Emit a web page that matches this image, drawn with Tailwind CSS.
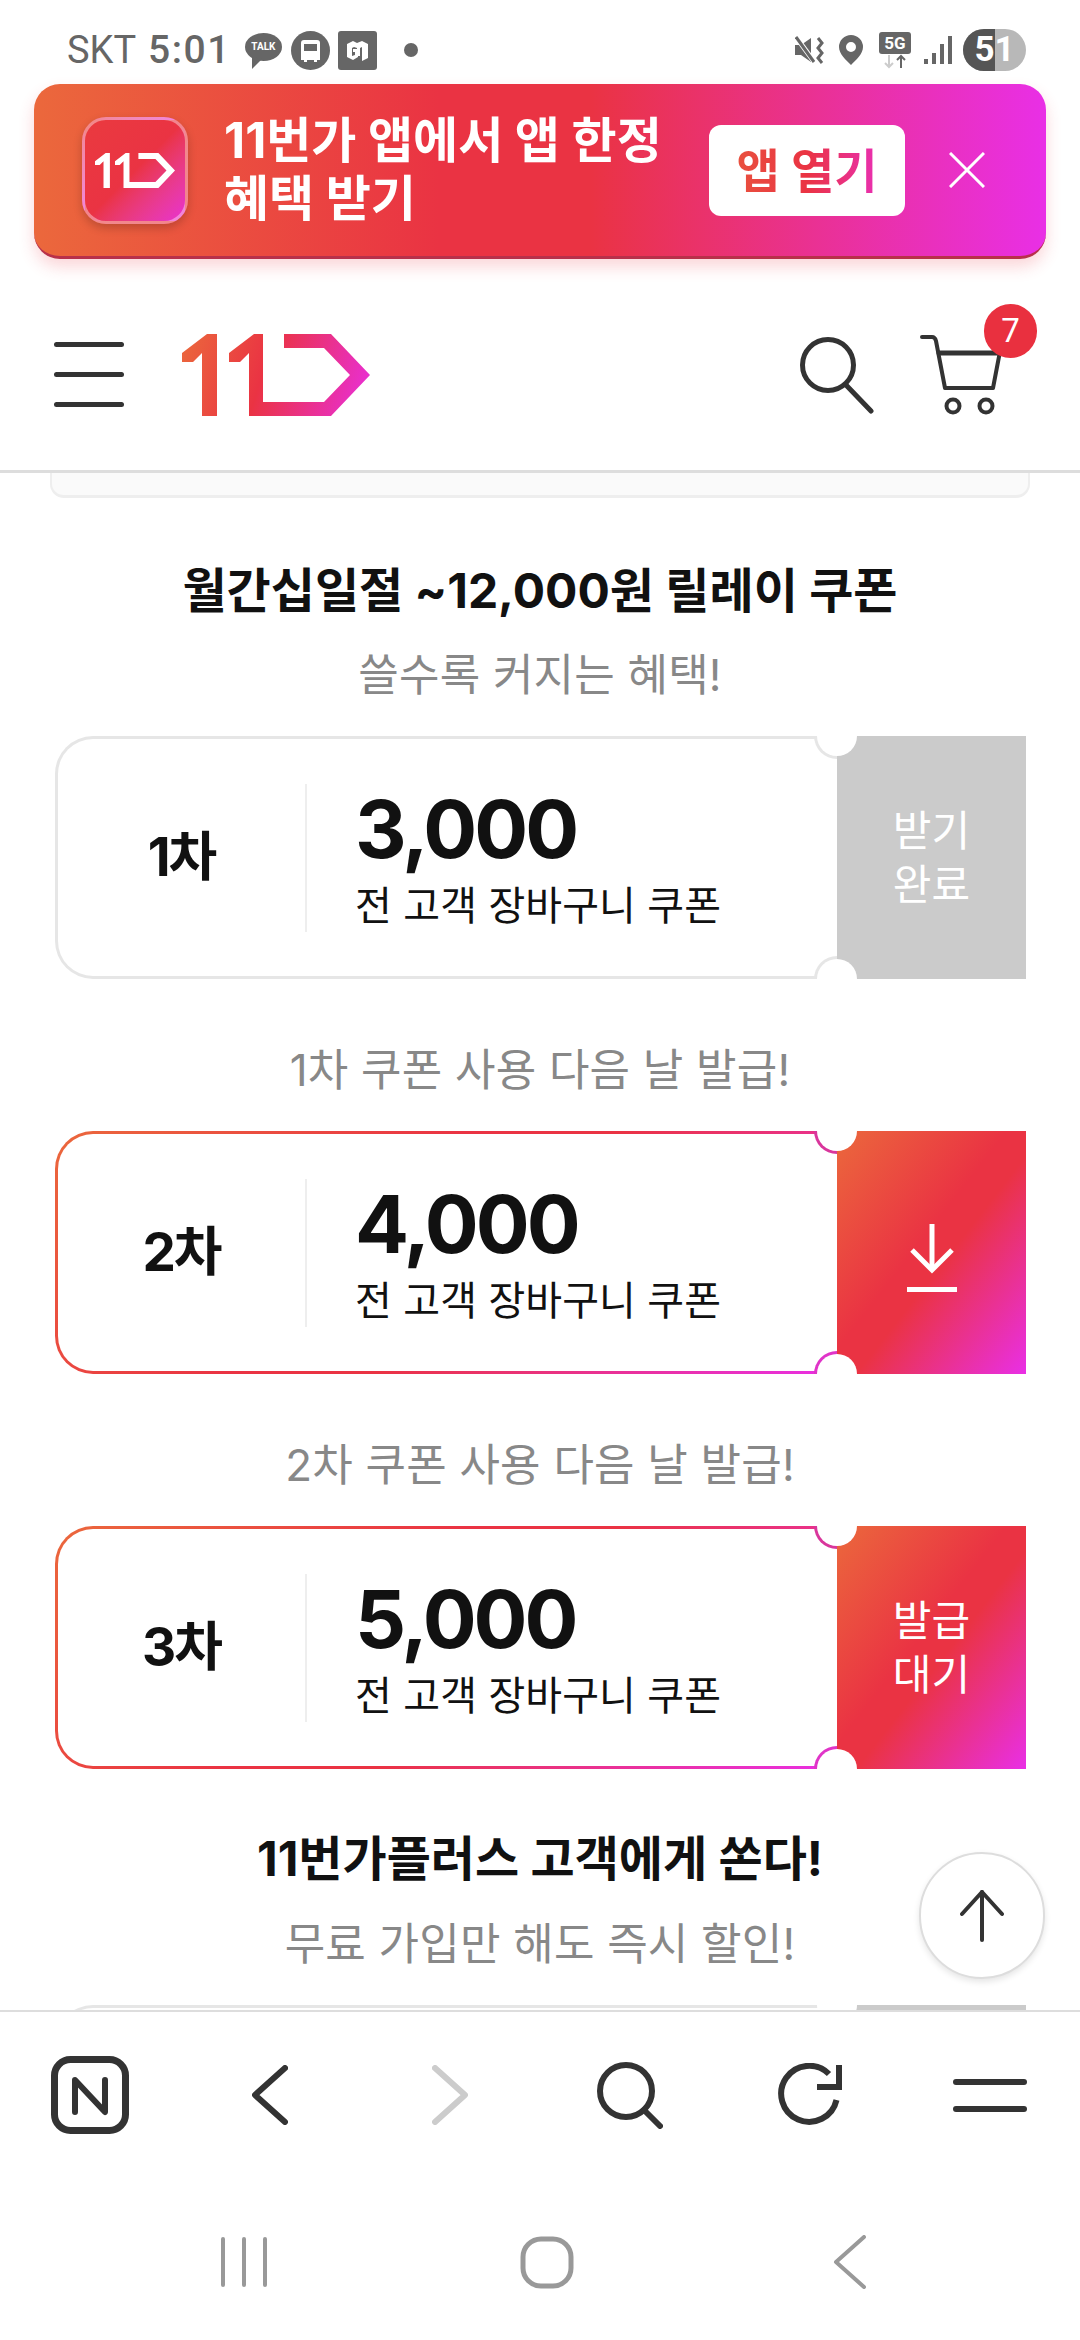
<!DOCTYPE html>
<html lang="ko">
<head>
  <meta charset="UTF-8">
  <meta name="viewport" content="width=device-width, initial-scale=1.0">
  <title>11번가 쿠폰</title>
  <script src="https://cdn.jsdelivr.net/npm/@tailwindcss/browser@4"></script>
</head>
<body class="bg-white">
  <div class="relative w-[1080px] h-[2340px] overflow-hidden bg-white flex flex-col font-['Inter','Noto_Sans_CJK_KR',sans-serif] text-[#111]">

    <!-- Status bar -->
    <div class="h-[84px] shrink-0 flex items-center justify-between pl-[67px] pr-[54px] pt-[16px] text-[#666]">
      <div class="flex items-center">
        <span class="font-['Roboto',sans-serif] text-[38px] leading-none">SKT</span>
        <span class="ml-[12px] font-['Roboto',sans-serif] font-medium text-[39px] leading-none tracking-[1.500px]">5:01</span>
        <div class="relative ml-[14px] w-[37px] h-[34px]">
          <svg width="37" height="36" viewBox="0 0 37 36" class="absolute inset-0"><ellipse cx="18.500" cy="14" rx="18.500" ry="14" fill="#666"/><path d="M7 24L7 36L17 26Z" fill="#666"/></svg>
          <span class="absolute left-0 top-[8px] w-[37px] text-center text-[10px] leading-[12px] font-bold text-white font-['Roboto',sans-serif]">TALK</span>
        </div>
        <svg class="ml-[9px]" width="39" height="39" viewBox="0 0 39 39"><circle cx="19.500" cy="19.500" r="19.500" fill="#666"/><path d="M10 12a3 3 0 0 1 3-3h13a3 3 0 0 1 3 3v17h-3v2h-3v-2h-7v2h-3v-2h-3Z" fill="#fff"/><path d="M13 13h13v7H13Z" fill="#666"/></svg>
        <svg class="ml-[8px]" width="39" height="39" viewBox="0 0 39 39"><rect width="39" height="39" rx="3" fill="#666"/><path d="M9 13l6-3 4 2 5-2 6 3v14l-6 3v-14l-2 1v8h-3v-8l-3-1-2 1v8l3-1v-3h-2v-3h5v8l-5 3-6-3Z" fill="#fff"/></svg>
        <span class="ml-[27px] w-[14px] h-[14px] rounded-full bg-[#666]"></span>
      </div>
      <div class="flex items-center">
        <svg width="30" height="28" viewBox="0 0 30 28"><path d="M0 9h6l10-7v24l-10-7H0Z" fill="#666"/><path d="M1 1l19 26" stroke="#fff" stroke-width="5"/><path d="M1 1l18 25" stroke="#666" stroke-width="3"/><path d="M23 2l4 5-4 5 4 5-4 5 4 5" fill="none" stroke="#666" stroke-width="3"/></svg>
        <svg class="ml-[14px]" width="24" height="30" viewBox="0 0 24 30"><path fill-rule="evenodd" d="M12 0a12 12 0 0 1 12 12c0 7-7 13-12 18C7 25 0 19 0 12A12 12 0 0 1 12 0Zm0 7a5 5 0 1 0 0 10 5 5 0 0 0 0-10Z" fill="#666"/></svg>
        <div class="ml-[16px] w-[32px] h-[37px] flex flex-col items-center">
          <span class="w-[32px] h-[22px] rounded-[3px] bg-[#666] text-white text-[17px] leading-[22px] font-bold text-center font-['Roboto',sans-serif]">5G</span>
          <svg width="24" height="15" viewBox="0 0 24 15"><path d="M6 1v12M2 9l4 4 4-4" fill="none" stroke="#ccc" stroke-width="2"/><path d="M18 14V2M14 6l4-4 4 4" fill="none" stroke="#666" stroke-width="2"/></svg>
        </div>
        <svg class="ml-[13px]" width="28" height="30" viewBox="0 0 28 30"><path d="M2 24v5M10 18v11M18 9v20M26 1v28" stroke="#666" stroke-width="4"/></svg>
        <div class="relative ml-[11px] w-[63px] h-[42px] rounded-full overflow-hidden bg-[#b8b8b8]">
          <div class="absolute left-0 top-0 w-[32px] h-[42px] bg-[#555]"></div>
          <span class="absolute inset-0 text-center text-white font-bold text-[35px] leading-[42px] font-['Roboto',sans-serif]">51</span>
        </div>
      </div>
    </div>

    <!-- App banner -->
    <div class="mx-[34px] h-[175px] shrink-0 rounded-[26px] border-b-[3px] border-[#b8304a] bg-[linear-gradient(90deg,#eb683c_0%,#ea3343_40%,#ea3343_55%,#e92fe6_100%)] shadow-[0_8px_16px_rgba(234,51,67,0.2)] flex items-center pl-[48px] z-10">
      <div class="w-[106px] h-[107px] shrink-0 rounded-[24px] border-[3px] border-white/40 bg-linear-to-br from-[#ea3a3f] via-[#ea3343] to-[#e92fd0] shadow-[0_4px_10px_rgba(0,0,0,0.2)] flex items-center justify-center">
        <svg width="80" height="35" viewBox="0 0 188 82"><path d="M25 0H35V82H20V19L11 28H0V19Z M72 0H81V68H142L168 41L142 14H102V0H149L188 41L149 82H67V19L58 28H47V19Z" fill="#fff"/></svg>
      </div>
      <p class="ml-[36px] w-[440px] shrink-0 text-white font-bold text-[49px] leading-[58px] whitespace-nowrap">11번가 앱에서 앱 한정<br>혜택 받기</p>
      <div class="ml-[45px] w-[196px] h-[91px] shrink-0 rounded-[12px] bg-white flex items-center justify-center">
        <span class="font-bold text-[47px] leading-none bg-[linear-gradient(90deg,#e9503e_0%,#ea3343_50%,#e92fb0_100%)] bg-clip-text text-transparent">앱 열기</span>
      </div>
      <svg class="ml-[44px] shrink-0" width="36" height="36" viewBox="0 0 36 36"><path d="M1 1L35 35M35 1L1 35" stroke="#fff" stroke-width="3"/></svg>
    </div>

    <!-- Header -->
    <div class="h-[217px] shrink-0 -mt-[3px] border-b-[3px] border-[#ddd] flex items-center pl-[54px] pr-[76px] pt-[23px]">
      <div class="flex flex-col gap-[25px] w-[70px]">
        <span class="h-[5px] rounded-full bg-[#333]"></span>
        <span class="h-[5px] rounded-full bg-[#333]"></span>
        <span class="h-[5px] rounded-full bg-[#333]"></span>
      </div>
      <svg class="ml-[58px]" width="188" height="82" viewBox="0 0 188 82">
        <defs><linearGradient id="logoGrad" gradientUnits="userSpaceOnUse" x1="0" y1="0" x2="188" y2="60"><stop offset="0" stop-color="#eb683c"/><stop offset="0.45" stop-color="#ea3343"/><stop offset="1" stop-color="#e92fd6"/></linearGradient></defs>
        <path d="M25 0H35V82H20V19L11 28H0V19Z M72 0H81V68H142L168 41L142 14H102V0H149L188 41L149 82H67V19L58 28H47V19Z" fill="url(#logoGrad)"/>
      </svg>
      <svg class="ml-auto" width="74" height="78" viewBox="0 0 74 78" fill="none" stroke="#333" stroke-width="5" stroke-linecap="round"><circle cx="28" cy="29" r="25.500"/><path d="M46 49L71 75"/></svg>
      <div class="relative ml-[46px] w-[84px] h-[80px]">
        <svg width="84" height="80" viewBox="0 0 84 80" fill="none" stroke="#333" stroke-linecap="round" stroke-linejoin="round"><path d="M2 2H12Q15 2 16 6L25 53H73L82 6" stroke-width="4"/><path d="M19 18H82" stroke-width="5"/><circle cx="33" cy="71" r="6.500" stroke-width="4"/><circle cx="66" cy="71" r="6.500" stroke-width="4"/></svg>
        <span class="absolute -top-[31px] left-[64px] w-[53px] h-[54px] rounded-full bg-[#e9303f] text-white text-center text-[33px] leading-[54px] font-['Roboto',sans-serif]">7</span>
      </div>
    </div>

    <!-- Coupon content -->
    <div class="flex-1 min-h-0 overflow-hidden">
      <div class="mx-[50px] h-[25px] rounded-b-[14px] bg-[#fafafa] border-x-[2px] border-b-[3px] border-[#eee]"></div>

      <h2 class="mt-[63px] text-center font-bold text-[48px] leading-[60px]">월간십일절 ~12,000원 릴레이 쿠폰</h2>
      <p class="mt-[24px] mb-[31px] text-center text-[#888] text-[44px] leading-[60px] tracking-[0.2px]">쓸수록 커지는 혜택!</p>

      <!-- 1차 -->
      <div class="relative ml-[55px] w-[971px] h-[243px] flex overflow-hidden">
        <div class="w-[782px] shrink-0 rounded-l-[38px] bg-[#e6e6e6] pl-[3px] py-[3px]">
          <div class="h-full rounded-l-[35px] bg-white flex items-center">
            <div class="w-[247px] text-center font-bold text-[53px] tracking-[-2px]">1차</div>
            <div class="w-[2px] h-[148px] bg-[#eee]"></div>
            <div class="pl-[48px] pt-[3px]">
              <div class="font-bold text-[80px] leading-[80px] tracking-[-3px]">3,000</div>
              <div class="mt-[13px] text-[40px] leading-[48px] tracking-[0.1px]">전 고객 장바구니 쿠폰</div>
            </div>
          </div>
        </div>
        <span class="absolute left-[759px] -top-[23px] w-[46px] h-[46px] rounded-full bg-[#e6e6e6]"></span>
        <span class="absolute left-[759px] -bottom-[23px] w-[46px] h-[46px] rounded-full bg-[#e6e6e6]"></span>
        <div class="relative w-[189px] shrink-0 bg-[#cbcbcb] text-white text-center text-[42px] leading-[54px] flex items-center justify-center">받기<br>완료</div>
        <span class="absolute left-[762px] -top-[20px] w-[40px] h-[40px] rounded-full bg-white"></span>
        <span class="absolute left-[762px] -bottom-[20px] w-[40px] h-[40px] rounded-full bg-white"></span>
      </div>

      <p class="mt-[61px] mb-[31px] text-center text-[#888] text-[44px] leading-[60px] tracking-[0.2px]">1차 쿠폰 사용 다음 날 발급!</p>

      <!-- 2차 -->
      <div class="relative ml-[55px] w-[971px] h-[243px] flex overflow-hidden">
        <div class="w-[782px] shrink-0 rounded-l-[38px] bg-[linear-gradient(135deg,#eb683c_0%,#ea3343_40%,#ea3343_55%,#e92fe6_100%)] pl-[3px] py-[3px]">
          <div class="h-full rounded-l-[35px] bg-white flex items-center">
            <div class="w-[247px] text-center font-bold text-[53px] tracking-[-2px]">2차</div>
            <div class="w-[2px] h-[148px] bg-[#eee]"></div>
            <div class="pl-[48px] pt-[3px]">
              <div class="font-bold text-[80px] leading-[80px] tracking-[-3px]">4,000</div>
              <div class="mt-[13px] text-[40px] leading-[48px] tracking-[0.1px]">전 고객 장바구니 쿠폰</div>
            </div>
          </div>
        </div>
        <span class="absolute left-[759px] -top-[23px] w-[46px] h-[46px] rounded-full bg-[#d9369c]"></span>
        <span class="absolute left-[759px] -bottom-[23px] w-[46px] h-[46px] rounded-full bg-[#e034c8]"></span>
        <div class="relative w-[189px] shrink-0 bg-[linear-gradient(to_bottom_right,#eb683c_0%,#ea3343_45%,#ea3343_55%,#e92fe6_100%)] flex items-center justify-center">
          <svg class="translate-y-[5px]" width="50" height="68" viewBox="0 0 50 68" fill="none" stroke="#fff" stroke-width="5"><path d="M25 0V46"/><path d="M5 26L25 46L45 26"/><path d="M0 65.500H50"/></svg>
        </div>
        <span class="absolute left-[762px] -top-[20px] w-[40px] h-[40px] rounded-full bg-white"></span>
        <span class="absolute left-[762px] -bottom-[20px] w-[40px] h-[40px] rounded-full bg-white"></span>
      </div>

      <p class="mt-[61px] mb-[31px] text-center text-[#888] text-[44px] leading-[60px] tracking-[0.2px]">2차 쿠폰 사용 다음 날 발급!</p>

      <!-- 3차 -->
      <div class="relative ml-[55px] w-[971px] h-[243px] flex overflow-hidden">
        <div class="w-[782px] shrink-0 rounded-l-[38px] bg-[linear-gradient(135deg,#eb683c_0%,#ea3343_40%,#ea3343_55%,#e92fe6_100%)] pl-[3px] py-[3px]">
          <div class="h-full rounded-l-[35px] bg-white flex items-center">
            <div class="w-[247px] text-center font-bold text-[53px] tracking-[-2px]">3차</div>
            <div class="w-[2px] h-[148px] bg-[#eee]"></div>
            <div class="pl-[48px] pt-[3px]">
              <div class="font-bold text-[80px] leading-[80px] tracking-[-3px]">5,000</div>
              <div class="mt-[13px] text-[40px] leading-[48px] tracking-[0.1px]">전 고객 장바구니 쿠폰</div>
            </div>
          </div>
        </div>
        <span class="absolute left-[759px] -top-[23px] w-[46px] h-[46px] rounded-full bg-[#d9369c]"></span>
        <span class="absolute left-[759px] -bottom-[23px] w-[46px] h-[46px] rounded-full bg-[#e034c8]"></span>
        <div class="relative w-[189px] shrink-0 bg-[linear-gradient(to_bottom_right,#eb683c_0%,#ea3343_45%,#ea3343_55%,#e92fe6_100%)] text-white text-center text-[42px] leading-[54px] flex items-center justify-center">발급<br>대기</div>
        <span class="absolute left-[762px] -top-[20px] w-[40px] h-[40px] rounded-full bg-white"></span>
        <span class="absolute left-[762px] -bottom-[20px] w-[40px] h-[40px] rounded-full bg-white"></span>
      </div>

      <h2 class="mt-[60px] text-center font-bold text-[48px] leading-[60px]">11번가플러스 고객에게 쏜다!</h2>
      <p class="mt-[25px] mb-[31px] text-center text-[#888] text-[44px] leading-[60px] tracking-[0.2px]">무료 가입만 해도 즉시 할인!</p>

      <!-- next coupon, cut off by the toolbar -->
      <div class="relative ml-[55px] w-[971px] h-[243px] flex overflow-hidden">
        <div class="w-[782px] shrink-0 rounded-l-[38px] bg-[#e6e6e6] pl-[3px] py-[3px]">
          <div class="h-full rounded-l-[35px] bg-white"></div>
        </div>
        <div class="relative w-[189px] shrink-0 bg-[#cbcbcb]"></div>
        <span class="absolute left-[762px] -top-[20px] w-[40px] h-[40px] rounded-full bg-white"></span>
      </div>
    </div>

    <!-- Scroll to top -->
    <div class="absolute left-[919px] top-[1852px] w-[126px] h-[127px] rounded-full bg-white border-[2px] border-[#ddd] shadow-[0_3px_6px_rgba(0,0,0,0.1)] flex items-center justify-center">
      <svg width="44" height="52" viewBox="0 0 44 52" fill="none" stroke="#333" stroke-width="4" stroke-linecap="round" stroke-linejoin="round"><path d="M22 2V50"/><path d="M2 24L22 2L42 24"/></svg>
    </div>

    <!-- Browser toolbar -->
    <div class="h-[168px] shrink-0 border-t-[2px] border-[#ddd] bg-white grid grid-cols-6 items-center justify-items-center">
      <svg width="78" height="78" viewBox="0 0 78 78" fill="none" stroke="#333" stroke-linejoin="round"><rect x="3.500" y="3.500" width="71" height="71" rx="16" stroke-width="7"/><path d="M24 56V24L54 56V24" stroke-width="6" stroke-linecap="round"/></svg>
      <svg width="36" height="60" viewBox="0 0 36 60" fill="none" stroke="#333" stroke-width="6" stroke-linecap="round" stroke-linejoin="round"><path d="M33 3L3 30L33 57"/></svg>
      <svg width="36" height="60" viewBox="0 0 36 60" fill="none" stroke="#ccc" stroke-width="6" stroke-linecap="round" stroke-linejoin="round"><path d="M3 3L33 30L3 57"/></svg>
      <svg width="66" height="68" viewBox="0 0 66 68" fill="none" stroke="#333" stroke-width="6" stroke-linecap="round"><circle cx="29" cy="30" r="26"/><path d="M47 49L63 65"/></svg>
      <svg width="66" height="64" viewBox="0 0 66 64" fill="none" stroke="#333" stroke-width="6"><path d="M59.500 37A28 28 0 1 1 52 11"/><path d="M62 2V24H40"/></svg>
      <div class="flex flex-col gap-[21px] w-[74px]">
        <span class="h-[6px] rounded-full bg-[#333]"></span>
        <span class="h-[6px] rounded-full bg-[#333]"></span>
      </div>
    </div>

    <!-- Android navigation -->
    <div class="h-[162px] shrink-0 bg-white pl-[92px] pt-[57px] grid grid-cols-[303px_303px_303px] grid-rows-[54px] items-center justify-items-center">
      <svg width="48" height="50" viewBox="0 0 48 50" stroke="#999" stroke-width="4" stroke-linecap="round"><path d="M3 2V48M24 2V48M45 2V48"/></svg>
      <svg width="54" height="53" viewBox="0 0 54 53" fill="none" stroke="#999" stroke-width="5"><rect x="3" y="3" width="48" height="47" rx="18"/></svg>
      <svg width="33" height="54" viewBox="0 0 33 54" fill="none" stroke="#999" stroke-width="4" stroke-linecap="round" stroke-linejoin="round"><path d="M31 2L3 27L31 52"/></svg>
    </div>
  </div>
</body>
</html>
